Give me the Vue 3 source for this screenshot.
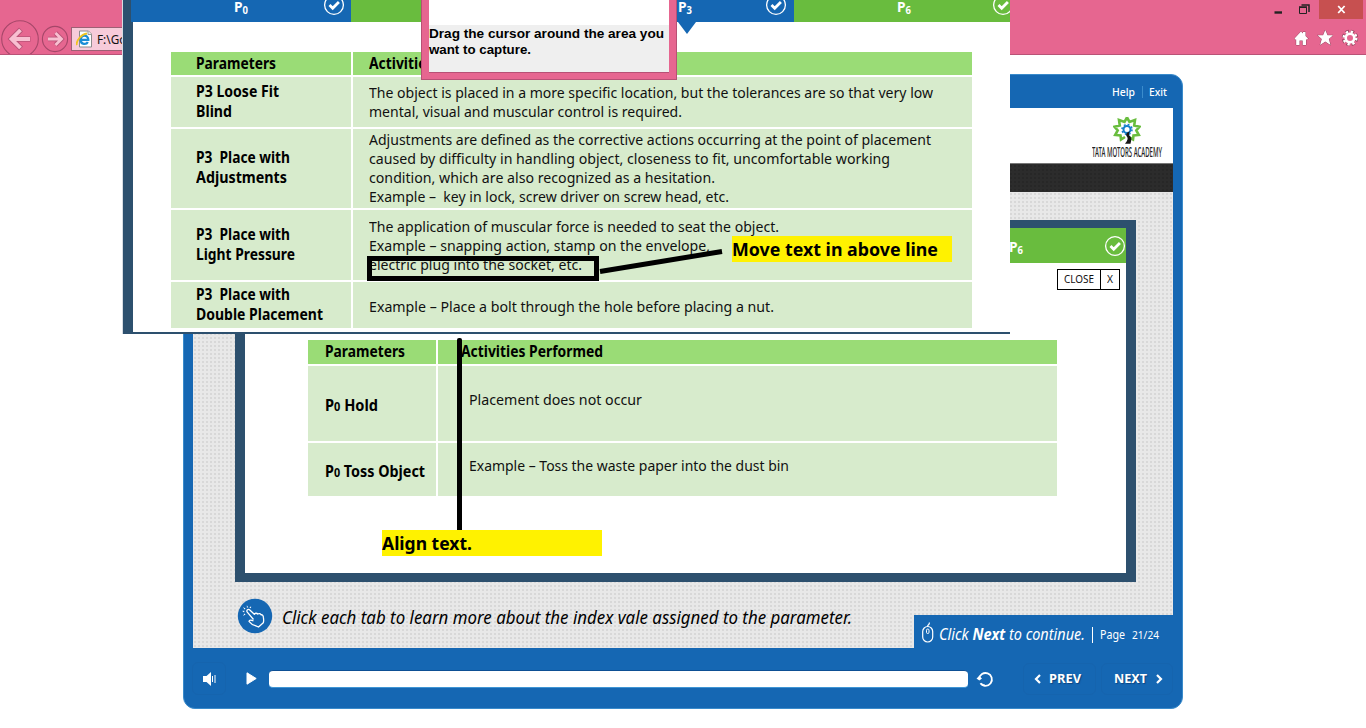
<script setup>
const applyFit = (el, { value }) => {
  el.style.transform = 'none'
  el.style.width = 'max-content'
  const natural = el.getBoundingClientRect().width
  if (!natural) return
  el.style.width = value + 'px'
  el.style.transform = `scaleX(${value / natural})`
}
const vFit = { mounted: applyFit }

const placementRows = [
  {
    name: [['P3 Loose Fit', 83], ['Blind', 36]],
    text: [
      ['The object is placed in a more specific location, but the tolerances are so that very low', 564],
      ['mental, visual and muscular control is required.', 313]
    ]
  },
  {
    name: [['P3\u00a0 Place with', 94], ['Adjustments', 91]],
    text: [
      ['Adjustments are defined as the corrective actions occurring at the point of placement', 562],
      ['caused by difficulty in handling object, closeness to fit, uncomfortable working', 521],
      ['condition, which are also recognized as a hesitation.', 346],
      ['Example –\u00a0 key in lock, screw driver on screw head, etc.', 360]
    ]
  },
  {
    name: [['P3\u00a0 Place with', 94], ['Light Pressure', 99]],
    text: [
      ['The application of muscular force is needed to seat the object.', 410],
      ['Example – snapping action, stamp on the envelope,', 341],
      ['electric plug into the socket, etc.', 213]
    ]
  },
  {
    name: [['P3\u00a0 Place with', 94], ['Double Placement', 127]],
    text: [['Example – Place a bolt through the hole before placing a nut.', 405]]
  }
]
</script>

<template>
  <main class="desktop">
    <header class="browser">
      <div class="nav">
        <svg class="nav-icons" width="70" height="54" viewBox="0 0 70 54">
          <g fill="#e66690" stroke="#a54769" stroke-width="1.1">
            <circle cx="20" cy="39" r="18.3" />
            <circle cx="55" cy="39" r="12.6" />
          </g>
          <path d="M30.500 39H12M21 29.500L11.500 39l9.500 9.500" fill="none" stroke="#b95377" stroke-width="5.600" />
          <path d="M30 39H12M20.500 30l-9 9 9 9" fill="none" stroke="#f8bfd1" stroke-width="3.800" />
          <path d="M48 39h12M55.500 33l6 6-6 6" fill="none" stroke="#b95377" stroke-width="4.600" />
          <path d="M48 39h12M55.500 33l6 6-6 6" fill="none" stroke="#f8bfd1" stroke-width="2.800" />
        </svg>
        <div class="address">
          <svg width="17" height="18" viewBox="0 0 17 18">
            <path d="M3.500 1h9l3 3v13h-12z" fill="#fff" stroke="#8c8c8c" />
            <path d="M12 1v3.500h3.500" fill="#eee" stroke="#999" />
            <path d="M4.500 9.800h7.800c0-5.500-7.500-5.500-7.600.2 0 4.800 5.800 4.700 7.100 1.900" fill="none" stroke="#1b8ed6" stroke-width="2.300" />
            <path d="M1 15C-.5 12 5 4 11 3.500" fill="none" stroke="#f0c420" stroke-width="1.800" />
          </svg>
          <span v-fit="41" class="url">F:\God\</span>
        </div>
      </div>
      <div class="window-tools">
        <div class="window-buttons">
          <svg width="40" height="19" viewBox="0 0 40 19">
            <path d="M3.500 12.500H11" stroke="#222" stroke-width="2.400" />
            <path d="M28.500 7.500h7v6h-7z" fill="none" stroke="#222" />
            <path d="M28 7h8M30.500 5h7.500v7" fill="none" stroke="#222" stroke-width="1.500" />
          </svg>
          <span class="quit">
            <svg width="9" height="9" viewBox="0 0 9 9"><path d="M1.200 1l6.400 7M7.600 1L1.200 8" stroke="#fff" stroke-width="1.800" /></svg>
          </span>
        </div>
        <svg class="tools" width="66" height="18" viewBox="0 0 66 18">
          <g fill="#fff" stroke="#974762" stroke-width="1" paint-order="stroke">
            <path d="M1.500 9.500L8 2.500l2 2V3h2.500v4l2.500 2.500-1 1h-1V16H9.700v-4.500H6.500V16H3.200v-5.500h-1z" />
            <path d="M32.300 1l2.200 5.300h5.500l-4.200 3.600 1.700 6.100-5.200-3.400-5.200 3.400 1.700-6.100-4.200-3.600h5.500z" />
          </g>
          <circle cx="57" cy="9" r="6" fill="none" stroke="#974762" stroke-width="4.500" stroke-dasharray="3 1.710" />
          <circle cx="57" cy="9" r="4.300" fill="none" stroke="#fff" stroke-width="2.600" />
          <circle cx="57" cy="9" r="6.300" fill="none" stroke="#fff" stroke-width="2.400" stroke-dasharray="2.300 2.648" />
        </svg>
      </div>
    </header>

    <section class="player">
      <div class="player-top">
        <span v-fit="23">Help</span><i></i><span v-fit="18">Exit</span>
      </div>
      <div class="stage">
        <div class="brand">
          <svg width="28" height="29" viewBox="0 0 28 29">
            <path d="M14 1.500l2.500 4.500 5.500-2-.8 5.500 5.300 1.300-3.200 3.700 2.500 4.500-5.300.5-.5 4-4.500-2.500M14 1.500L11.500 6 6 4l.8 5.500-5.300 1.300 3.200 3.700L2.200 19l5.300.5.500 4 4-2.500" fill="none" stroke="#69bd3e" stroke-width="2.600" />
            <circle cx="14" cy="13.500" r="3.500" fill="none" stroke="#1680cb" stroke-width="2" />
            <circle cx="14" cy="13.500" r="5" fill="none" stroke="#1680cb" stroke-width="1.600" stroke-dasharray="1.900 2.027" />
            <path d="M17 15.500c-3 .5-5 3-3 5.200 1.500 2 0 4.500-2 7h5.500c1-4 1.500-6-1-8-.8-1.500-.8-2.500.5-4.200z" fill="#161616" />
          </svg>
          <span v-fit="70">TATA MOTORS ACADEMY</span>
        </div>
        <div class="band"></div>
        <div class="canvas">
          <div class="panel">
            <div class="panel-tabs">
              <span v-fit="14" class="tab-name">P<sub>6</sub></span>
              <svg width="22" height="22" viewBox="0 0 22 22"><circle cx="11" cy="11" r="9.400" fill="none" stroke="#fff" stroke-width="1.300" /><path d="M6.500 11l3.200 3.200 6.200-6.200" fill="none" stroke="#fff" stroke-width="2.800" /></svg>
            </div>
            <div class="close"><span class="close-word"><b v-fit="30">CLOSE</b></span><span class="close-x"><b v-fit="6">X</b></span></div>
            <div class="grid lower">
              <div class="head"><span v-fit="80">Parameters</span></div>
              <div class="head wide-head"><span v-fit="142">Activities Performed</span></div>
              <div class="name"><span v-fit="53">P<small>0</small> Hold</span></div>
              <div class="text"><span v-fit="173">Placement does not occur</span></div>
              <div class="name"><span v-fit="100">P<small>0</small> Toss Object</span></div>
              <div class="text"><span v-fit="320">Example – Toss the waste paper into the dust bin</span></div>
            </div>
          </div>
          <div class="prompt">
            <svg width="36" height="36" viewBox="0 0 36 36">
              <circle cx="18" cy="18" r="17.200" fill="#1567b3" />
              <g fill="none" stroke="#fff" stroke-width="1.300" stroke-linejoin="round">
                <path d="M16.500 21.500L10.300 14.200c-1.300-2 .9-3.700 2.500-2.200l4.500 4.300c.8-1.300 2.500-1.400 3.400-.3 1.400-.8 2.800-.3 3.300.8 1.500-.3 2.300.8 2.400 2.600.2 2 .6 3.400-.1 5.400L21.500 29l-3.200-1.400c-3-.6-4.700-2.300-6.300-4.300.3-1.600 2.300-1.400 4.500-.3" />
                <path d="M8 16l-1.500 1.500M7.300 13.500l-2-.3M8 11L6.500 9.500M10.500 9.500l-.3-2M13 9.800l1.200-1.500" stroke-dasharray="1.200 .6" />
              </g>
            </svg>
            <span v-fit="570">Click each tab to learn more about the index vale assigned to the parameter.</span>
          </div>
          <div class="continue">
            <svg width="14" height="21" viewBox="0 0 14 21"><rect x="1.700" y="4.500" width="10" height="15.500" rx="5" fill="none" stroke="#fff" stroke-width="1.200" /><rect x="5.500" y="7" width="2.500" height="4.500" rx="1.200" fill="none" stroke="#fff" /><path d="M6.700 4.500c-.5-2 2.500-1.500 1.500-4" fill="none" stroke="#fff" stroke-width="1.200" /></svg>
            <em v-fit="146">Click <b>Next</b> to continue.</em>
            <i></i>
            <span v-fit="25" class="page">Page</span>
            <span v-fit="27" class="count">21/24</span>
          </div>
        </div>
      </div>
      <div class="controls">
        <div class="volume">
          <svg width="14" height="14" viewBox="0 0 14 14"><path d="M0 4h3.500L8 0v14l-4.500-4H0z" fill="#fff" /><path d="M9.500 4v6M12 3v8" stroke="#fff" stroke-width="1" /></svg>
        </div>
        <svg class="play" width="11" height="13" viewBox="0 0 11 13"><path d="M1 .8l9.200 5.700L1 12.200z" fill="#fff" stroke="#fff" stroke-linejoin="round" /></svg>
        <div class="seek"></div>
        <svg class="replay" width="18" height="18" viewBox="0 0 18 18"><path d="M3.100 9a6.400 6.400 0 1 1 1.300 4.300" fill="none" stroke="#fff" stroke-width="1.800" /><path d="M5 13.800a6.400 6.400 0 0 0 4 1.800" fill="none" stroke="#fff" stroke-width="1.800" /><path d="M.5 8.500L3.300 6l2.700 2.500L3.300 10.500z" fill="#fff" /></svg>
        <div class="step prev"><svg width="8" height="10" viewBox="0 0 8 10"><path d="M6 1L2 5l4 4" fill="none" stroke="#fff" stroke-width="2.200" /></svg><span v-fit="32">PREV</span></div>
        <div class="step next"><span v-fit="33">NEXT</span><svg width="8" height="10" viewBox="0 0 8 10"><path d="M2 1l4 4-4 4" fill="none" stroke="#fff" stroke-width="2.200" /></svg></div>
      </div>
    </section>

    <section class="capture">
      <div class="capture-tabs">
        <div class="tab blue t0"><span v-fit="14" class="tab-name">P<sub>0</sub></span><svg width="22" height="22" viewBox="0 0 22 22"><circle cx="11" cy="11" r="9.400" fill="none" stroke="#fff" stroke-width="1.300" /><path d="M6.500 11l3.200 3.200 6.200-6.200" fill="none" stroke="#fff" stroke-width="2.800" /></svg></div>
        <div class="tab green t1"></div>
        <div class="tab blue t3"><span v-fit="14" class="tab-name">P<sub>3</sub></span><svg width="22" height="22" viewBox="0 0 22 22"><circle cx="11" cy="11" r="9.400" fill="none" stroke="#fff" stroke-width="1.300" /><path d="M6.500 11l3.200 3.200 6.200-6.200" fill="none" stroke="#fff" stroke-width="2.800" /></svg></div>
        <div class="tab green t6"><span v-fit="14" class="tab-name">P<sub>6</sub></span><svg width="22" height="22" viewBox="0 0 22 22"><circle cx="11" cy="11" r="9.400" fill="none" stroke="#fff" stroke-width="1.300" /><path d="M6.500 11l3.200 3.200 6.200-6.200" fill="none" stroke="#fff" stroke-width="2.800" /></svg></div>
      </div>
      <div class="grid upper">
        <div class="head"><span v-fit="80">Parameters</span></div>
        <div class="head"><span v-fit="142">Activities Performed</span></div>
        <template v-for="(row, i) in placementRows" :key="i">
          <div class="name" :class="'r' + i"><span v-for="(line, j) in row.name" :key="j" v-fit="line[1]">{{ line[0] }}</span></div>
          <div class="text" :class="'r' + i"><span v-for="(line, j) in row.text" :key="j" v-fit="line[1]">{{ line[0] }}</span></div>
        </template>
      </div>
    </section>

    <aside class="hint">
      <div class="hint-blank"></div>
      <div class="hint-text">
        <span v-fit="235">Drag the cursor around the area you</span>
        <span v-fit="102">want to capture.</span>
      </div>
    </aside>

    <div class="mark-box"></div>
    <svg class="mark-line" width="130" height="30" viewBox="0 0 130 30"><path d="M2 24.500L124 4.500" stroke="#000" stroke-width="5" /></svg>
    <div class="mark-rule"></div>
    <div class="note note-move"><span v-fit="206">Move text in above line</span></div>
    <div class="note note-align"><span v-fit="90">Align text.</span></div>
  </main>
</template>

<style>
body { background: #fff; overflow: hidden; }
</style>

<style scoped>
.desktop { position: relative; width: 1366px; height: 728px; overflow: hidden; background: #fff; color: #111; font-family: "Noto Sans", "Open Sans", sans-serif; font-size: 15px; }
.desktop * { box-sizing: border-box; }
svg { display: block; flex: none; }
span, em, b { white-space: nowrap; }
.desktop [style] { display: block; transform-origin: 0 50%; flex: none; }
.browser { display: flex; justify-content: space-between; height: 55px; background: #e66690; border-bottom: 1px solid #b95377; }
.nav { display: flex; }
.address { display: flex; align-items: center; gap: 4px; width: 300px; height: 24px; margin: 27px 0 0 1px; padding-left: 4px; border: 1px solid #9d6075; background: #f7cbda; font-size: 12px; }
.window-tools { width: 110px; }
.window-buttons { display: flex; height: 19px; padding-left: 15px; }
.quit { display: flex; align-items: center; justify-content: center; width: 44px; height: 19px; margin-left: 8px; background: #c75050; flex: none; }
.tools { margin: 10px 0 0 37px; }

.player { width: 1000px; height: 635px; margin: 19px 0 0 183px; border: 1px solid #3a8bcb; border-radius: 12px; background: #1567b3; }
.player-top { display: flex; align-items: center; justify-content: flex-end; height: 33px; padding: 0 15px 0 0; color: #fff; font-size: 11.500px; font-weight: 500; }
.player-top i { width: 1px; height: 12px; margin: 0 6px 0 7px; background: #3b8ccc; }
.stage { width: 980px; height: 540px; margin-left: 9px; }
.brand { display: flex; flex-direction: column; align-items: center; height: 55px; padding: 8px 11px 0 899px; background: #fff; }
.brand span { font-size: 14px; line-height: 10px; font-weight: 500; margin-top: 2px; color: #222; }
.band { height: 29px; background: #2c2c2c; border-top: 1px solid #777; background-image: radial-gradient(circle, #272727 1px, transparent 1.300px); background-size: 4px 4px; }
.canvas { position: relative; height: 456px; padding: 28px 0 0 42px; background-color: #e8e8e8; background-image: radial-gradient(circle at 50% 50%, #d8d8d8 .7px, transparent 1.500px); background-size: 4px 4px; }
.panel { width: 901px; height: 362px; border: solid #2d506e; border-width: 8px 10px 9px; background: #fff; }
.panel-tabs { display: flex; align-items: center; justify-content: flex-end; height: 35px; background: #69bc3e; }
.tab-name { color: #fff; font-weight: 700; font-size: 14.500px; line-height: 18px; }
.tab-name sub { font-size: 10px; line-height: 0; vertical-align: -2px; }
.panel-tabs svg { margin-left: 81px; }
.close { display: flex; width: 63px; height: 21px; margin: 6px 6px 0 auto; border: 1px solid #000; font-size: 11.500px; line-height: 18px; }
.close b { font-weight: 400; }
.close-word { width: 43px; padding-left: 6px; border-right: 1px solid #000; }
.close-x { padding-left: 6px; }

.grid { display: grid; gap: 2px; }
.head { display: flex; align-items: center; background: #9adc76; font-weight: 700; }
.head, .name, .text { font-size: 15.300px; }
.name, .text { display: flex; flex-direction: column; justify-content: center; background: #d7ebcc; }
.name { font-weight: 700; line-height: 20px; }
.text { line-height: 19px; padding-left: 16px; }
.head { padding-bottom: 2px; }
.head, .name { color: #000; }
.upper .name { padding-bottom: 2px; }
.upper .name.r1 { padding-bottom: 4px; }
.upper .text.r1 { padding-bottom: 2px; }
.upper .text.r3 { padding-top: 2px; }
.lower { width: 749px; margin: 50px 0 0 63px; grid-template: 24px 75px 53px / 128px 619px; }
.lower .head, .lower .name { padding-left: 17px; }
.lower .wide-head { padding-left: 23px; }
.lower .name { padding-top: 4px; }
.lower .text { padding: 0 0 9px 31px; }
.name small { font-size: 11.500px; }
.upper { width: 801px; margin: 30px 0 0 48px; grid-template: 23px 50px 79px 70px 46px / 180px 619px; }
.upper .head, .upper .name { padding-left: 25px; }
.upper .head + .head { padding-left: 16px; }

.prompt { display: flex; align-items: center; gap: 9px; margin: 16px 0 0 2px; font-size: 18.500px; font-style: italic; color: #000; }
.continue { position: absolute; right: 0; bottom: 0; display: flex; align-items: center; width: 259px; height: 33px; padding: 6px 0 0 7px; background: #1567b3; color: #fff; font-size: 15.500px; }
.continue svg { margin: -5px 4px 0 0; }
.continue em { margin-top: -1px; }
.continue i { width: 1px; height: 16px; margin: 0 7px; background: #fff; }
.page { font-size: 12px; }
.count { margin-left: 7px; font-size: 11px; }
.controls { display: flex; align-items: center; height: 60px; padding: 1px 0 0 8px; color: #fff; font-size: 12.500px; font-weight: 700; }
.volume { display: flex; align-items: center; width: 34px; height: 33px; padding-left: 10px; border: 1px solid #1564ae; border-radius: 6px; }
.play { margin-left: 20px; }
.seek { width: 699px; height: 18px; margin-left: 12px; border-radius: 4px; background: #fff; border-top: 1px solid #0d4f94; border-bottom: 1px solid #3f95d4; }
.replay { margin-left: 8px; }
.step { display: flex; align-items: center; height: 32px; border: 1px solid #1564ae; border-radius: 6px; text-shadow: 1px 1px 1px #0d4681; }
.prev { width: 73px; margin-left: 29px; padding-left: 10px; gap: 7px; }
.next { width: 72px; margin-left: 5px; padding-left: 12px; gap: 8px; }

.capture { position: absolute; left: 122px; top: 0; width: 888px; height: 334px; border-left: 1px solid #d7dce2; background: linear-gradient(90deg, #2d506e 10px, #fff 10px); overflow: hidden; }
.capture::after { content: ""; position: absolute; left: 0; right: 0; bottom: 0; height: 2px; background: #2d506e; }
.capture-tabs { display: flex; height: 22px; padding-left: 8px; }
.tab { position: relative; display: flex; justify-content: space-between; height: 22px; }
.tab svg { margin-top: -6px; }
.tab .tab-name { line-height: 12px; height: 12px; }
.blue { background: #1567b3; }
.green { background: #69bc3e; }
.t0 { width: 220px; padding: 0 6px 0 103px; }
.t1 { width: 222px; }
.t3 { width: 221px; padding: 0 7px 0 105px; }
.t3::after { content: ""; position: absolute; left: 105px; top: 22px; border: solid transparent; border-width: 12px 9px 0; border-top-color: #1567b3; }
.t6 { width: 216px; padding: 0 0 0 103px; }
.t6 svg { margin-right: -4px; }

.hint { position: absolute; left: 421px; top: 0; width: 256px; height: 80px; border: 1px solid #b75175; border-top: 0; background: #e66690; padding: 0 7px; }
.hint-blank { height: 25px; background: #fff; }
.hint-text { height: 48px; padding-top: 1px; background: #efefef; border-bottom: 1px solid #b75175; font: 700 13px/16px "Liberation Sans", sans-serif; color: #000; }
.mark-box { position: absolute; left: 367px; top: 256px; width: 232px; height: 25px; border: 5px solid #000; }
.mark-line { position: absolute; left: 598px; top: 247px; }
.mark-rule { position: absolute; left: 457px; top: 338px; width: 5px; height: 192px; border-radius: 2px 2px 0 0; background: #000; }
.note { position: absolute; width: 220px; height: 26px; background: #fff200; color: #000; font-size: 18px; line-height: 27px; font-weight: 700; }
.note-move { left: 732px; top: 236px; }
.note-align { left: 382px; top: 530px; }
</style>
